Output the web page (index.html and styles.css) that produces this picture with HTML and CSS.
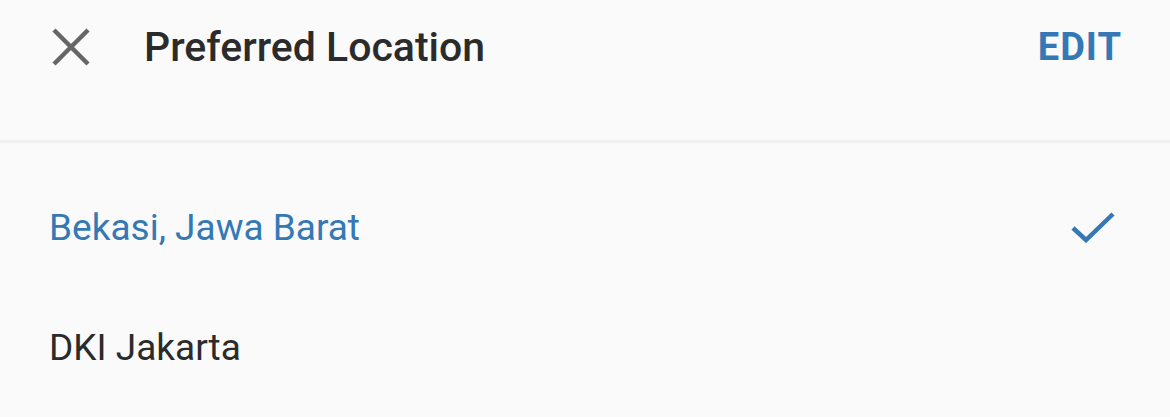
FILE: index.html
```html
<!DOCTYPE html>
<html lang="en">
<head>
  <meta charset="UTF-8">
  <title>Preferred Location</title>
  <link rel="stylesheet" href="styles.css">
</head>
<body>

  <div class="header">
    <button class="close" aria-label="Close">
      <svg width="38" height="38" viewBox="0 0 38 38">
        <path d="M2 2 L36 36 M36 2 L2 36" stroke="#666" stroke-width="4.5" fill="none"/>
      </svg>
    </button>
    <h1 class="title">Preferred Location</h1>
    <span class="edit">EDIT</span>
  </div>

  <ul class="locations">
    <li class="location selected">
      <span>Bekasi, Jawa Barat</span>
      <svg width="44" height="32" viewBox="0 0 44 32">
        <path d="M2 17 L15 29 L42 3" stroke="#3479b5" stroke-width="4.5" fill="none"/>
      </svg>
    </li>
    <li class="location">
      <span>DKI Jakarta</span>
    </li>
  </ul>

</body>
</html>
```

FILE: styles.css
```css
body {
  margin: 0;
  background: #fafafa;
  font-family: Roboto, "Liberation Sans", Arial, sans-serif;
  color: #2b2b2b;
}
.header {
  display: flex;
  align-items: center;
  height: 93px;
  padding: 0 48px 47px 52px;
  border-bottom: 3px solid #f0f0f0;
}
.close {
  background: none;
  border: none;
  padding: 0;
  width: 38px;
  height: 38px;
  margin-right: 54px;
}
.close svg {
  display: block;
}
.title {
  flex: 1;
  margin: 0;
  font-size: 41px;
  font-weight: 500;
  color: #2b2b2b;
}
.edit {
  font-size: 38px;
  font-weight: 700;
  letter-spacing: 1px;
  color: #3479b5;
}
.locations {
  list-style: none;
  margin: 0;
  padding: 24px 0 0;
}
.location {
  display: flex;
  align-items: center;
  justify-content: space-between;
  height: 120px;
  padding: 0 55px 0 49px;
  font-size: 37px;
}
.selected {
  color: #3479b5;
}
```
